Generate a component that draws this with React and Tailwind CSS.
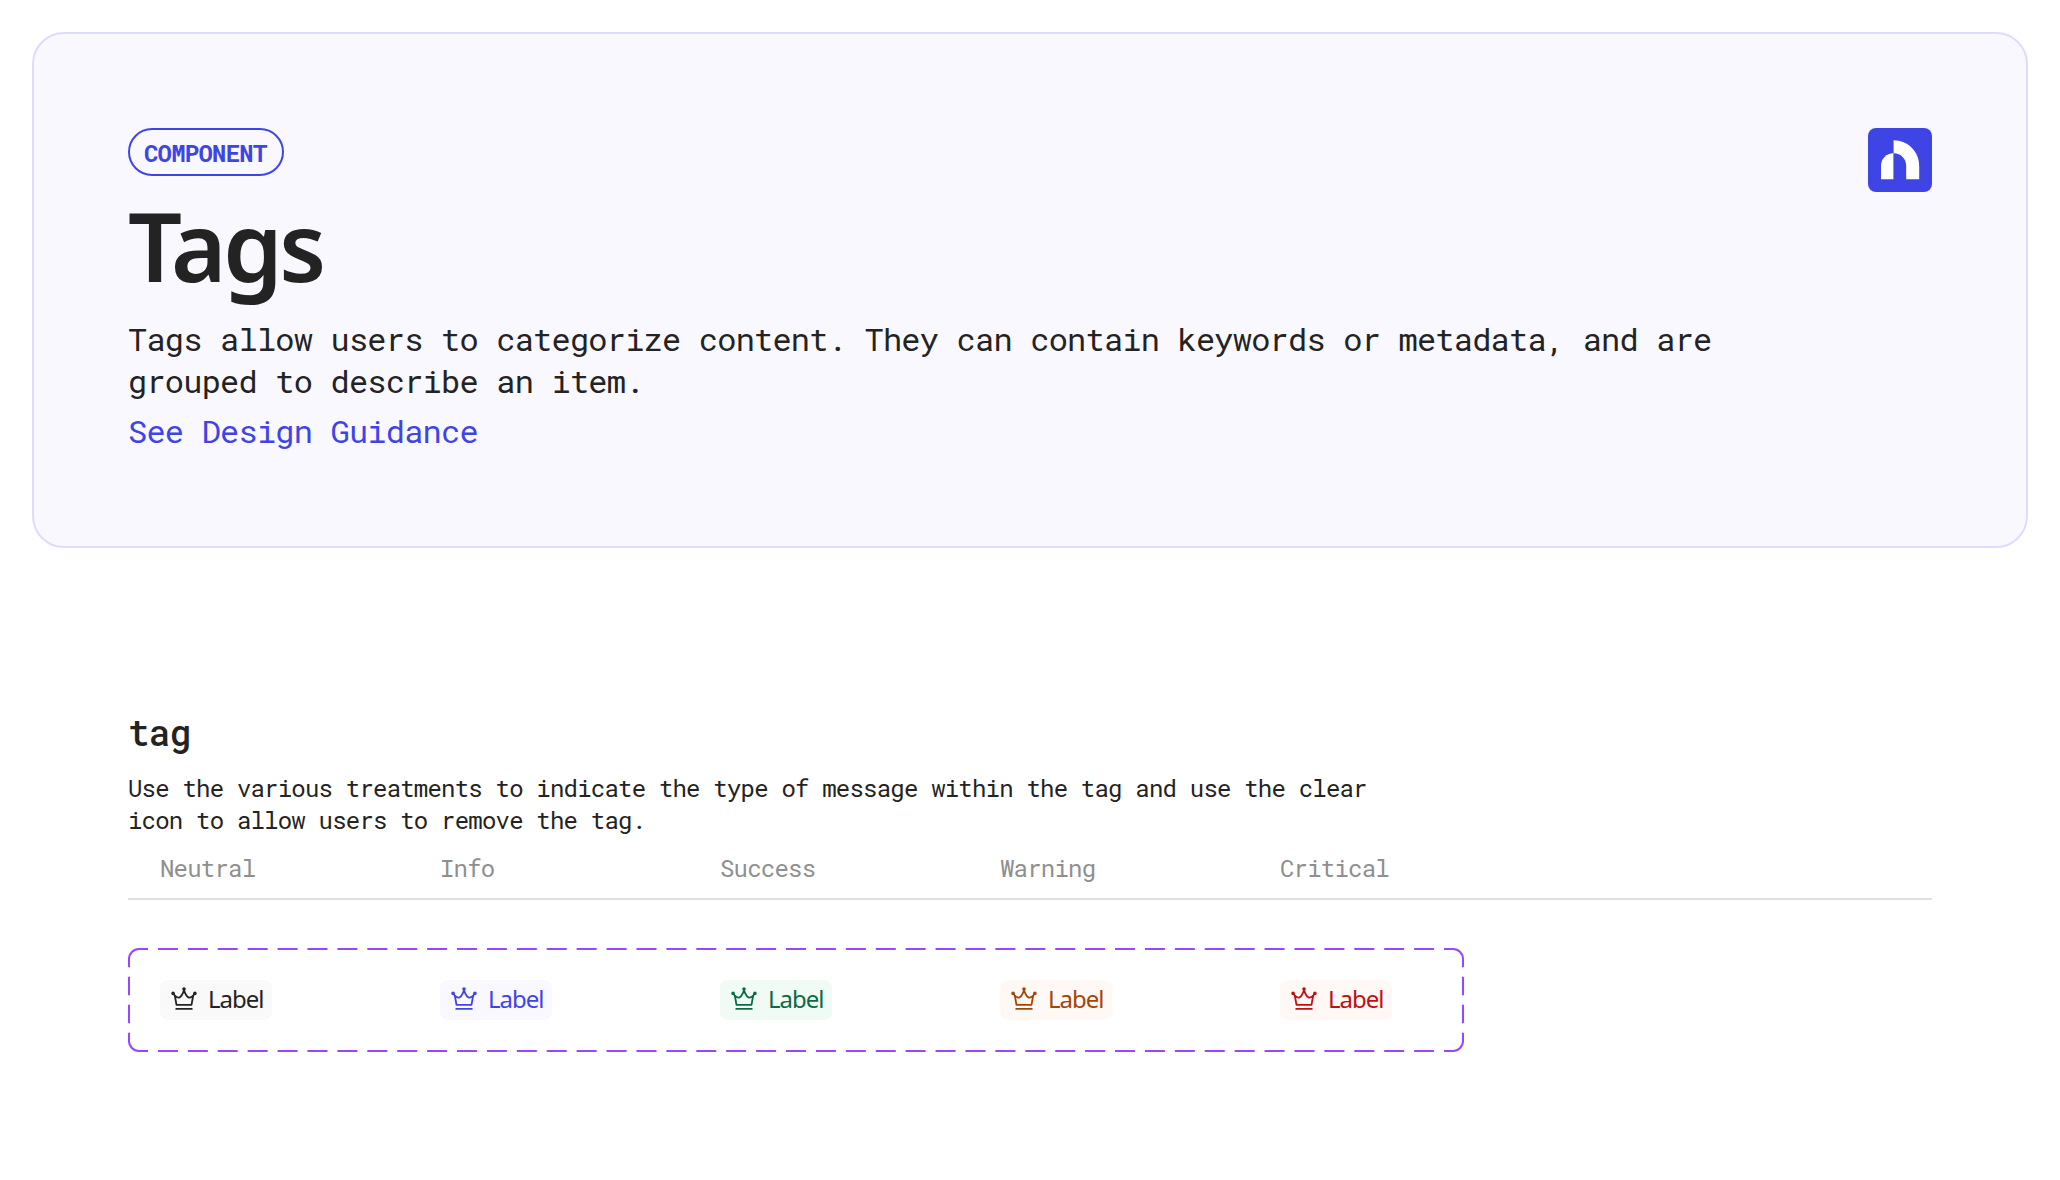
import React from 'react';

const tags = [
  { id: 1, name: 'Neutral', style: 'bg-[#faf9fa] text-[#232323]' },
  { id: 2, name: 'Info', style: 'bg-[#f9f8ff] text-[#3f45e4]' },
  { id: 3, name: 'Success', style: 'bg-[#f1fbf6] text-[#0c6b45]' },
  { id: 4, name: 'Warning', style: 'bg-[#fff8f5] text-[#a2470c]' },
  { id: 5, name: 'Critical', style: 'bg-[#fff8f5] text-[#c20f14]' },
];

const Logo = () => (
  <svg className="size-16 shrink-0" viewBox="0 0 64 64">
    <rect width="64" height="64" rx="8" fill="#3f45e4" />
    <path d="M13 51.3V37.7C13 30.7 18.5 25.2 25.4 25.2V51.3Z" fill="#fff" />
    <path d="M25.6 12.3C39.8 12.3 51.2 23.7 51.2 37.7V51.3H38.2V37.7C38.2 30.7 32.8 25.2 25.6 25.2Z" fill="#fff" />
  </svg>
);

const CrownIcon = () => (
  <svg className="size-8 shrink-0" viewBox="0 0 32 32" fill="none" stroke="currentColor" strokeWidth="1.8" strokeLinecap="round" strokeLinejoin="round">
    <path d="M5.4 9.6L7 11.9C8.8 13.4 10.2 13.8 11.5 13.4C13 12.8 14.8 9.6 16 6.4C17.2 9.6 19 12.8 20.5 13.4C21.8 13.8 23.2 13.4 25 11.9L26.6 9.6" />
    <path d="M6.9 12L8.5 20.8H23.5L25.1 12" />
    <path d="M8.2 24.9H23.8" />
    <g fill="currentColor" stroke="none">
      <circle cx="16" cy="5" r="1.8" />
      <circle cx="5.1" cy="9.4" r="1.8" />
      <circle cx="26.9" cy="9.4" r="1.8" />
    </g>
  </svg>
);

const Tag = ({ style }) => (
  <span className={`flex h-10 w-28 items-center gap-2 rounded-lg px-2 ${style}`}>
    <CrownIcon />
    <span className="pb-0.5 font-['Noto_Sans',sans-serif] text-2xl tracking-[-1px]">Label</span>
  </span>
);

// dashed frame around the variants, every side starts and ends on a full dash
const DashedFrame = () => (
  <svg className="pointer-events-none absolute inset-0" width="1336" height="104" fill="none" stroke="#9747ff" strokeWidth="2">
    <path d="M10 1H1326M10 103H1326" strokeDasharray="20 9.91" strokeDashoffset="10" />
    <path d="M1 10V94M1335 10V94" strokeDasharray="18.67 9.33" strokeDashoffset="9.33" />
    <path d="M1 11A10 10 0 0 1 11 1M1325 1A10 10 0 0 1 1335 11M1335 93A10 10 0 0 1 1325 103M11 103A10 10 0 0 1 1 93" />
  </svg>
);

const App = () => {
  return (
    <main className="h-[1180px] w-[2060px] bg-white p-8 font-['Roboto_Mono','DejaVu_Sans_Mono',monospace] tracking-[-0.79px] text-[#232323]">
      <header className="flex h-[516px] items-start justify-between rounded-[32px] border-2 border-[#dedcfc] bg-[#f9f8ff] px-[94px] pt-[94px]">
        <div>
          <div className="flex h-12 w-[156px] items-center rounded-full border-2 border-[#3f45e4] pt-0.5 pl-3.5 text-2xl font-bold text-[#3f45e4]">
            COMPONENT
          </div>
          <h1 className="mt-[9px] font-['Noto_Sans',sans-serif] text-[95px]/[120px] font-semibold tracking-[-3.4px]">Tags</h1>
          <p className="mt-[13px] w-[1600px] text-[32px]/[42px]">
            Tags allow users to categorize content. They can contain keywords or metadata, and are
            <br />
            grouped to describe an item.
          </p>
          <a className="mt-2 block text-[32px]/[42px] text-[#3f45e4]">See Design Guidance</a>
        </div>
        <Logo />
      </header>

      <section className="mx-24 mt-40">
        <h2 className="text-4xl/[48px] font-medium">tag</h2>
        <p className="mt-4 text-2xl/8">
          Use the various treatments to indicate the type of message within the tag and use the clear
          <br />
          icon to allow users to remove the tag.
        </p>
        <div className="mt-4 flex border-b-2 border-[#e0e0e0] pb-3.5 pl-8 text-2xl/8 text-[#8f8f8f]">
          {tags.map((tag) => (
            <span key={tag.id} className="w-[280px]">{tag.name}</span>
          ))}
        </div>
        <div className="relative mt-12 flex h-[104px] w-[1336px] items-center pl-8">
          {tags.map((tag) => (
            <div key={tag.id} className="w-[280px] shrink-0">
              <Tag style={tag.style} />
            </div>
          ))}
          <DashedFrame />
        </div>
      </section>
    </main>
  );
};

export default App;
